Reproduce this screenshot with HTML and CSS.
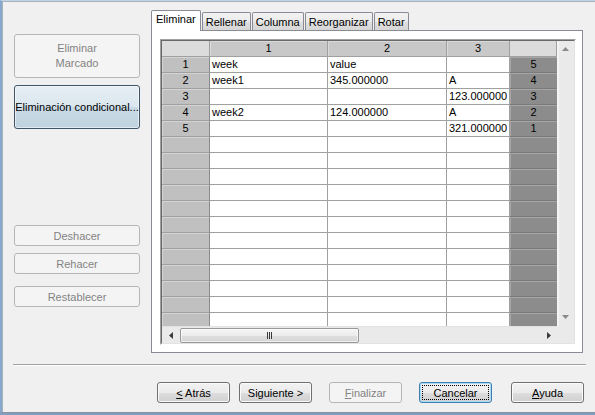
FILE: index.html
```html
<!DOCTYPE html>
<html>

<head>
    <title>Asistente de datos</title>
    <meta charset="utf-8">
    <link rel="stylesheet" href="styles.css">
</head>

<body>
    <div class="window">
        <div class="main">
            <div class="sidebar">
                <button class="btn-side" disabled>Eliminar<br>Marcado</button>
                <button class="btn-side active">Eliminación condicional...</button>

                <div class="side-tools">
                    <button class="btn-tool" disabled>Deshacer</button>
                    <button class="btn-tool" disabled>Rehacer</button>
                    <button class="btn-tool reset" disabled>Restablecer</button>
                </div>
            </div>

            <div class="tab-area">
                <div class="tab-strip">
                    <div class="tab selected">Eliminar</div>
                    <div class="tab">Rellenar</div>
                    <div class="tab">Columna</div>
                    <div class="tab">Reorganizar</div>
                    <div class="tab">Rotar</div>
                </div>

                <div class="tab-panel">
                    <div class="grid-frame">
                        <div class="grid-inner">
                            <div class="grid-body">
                                <table class="sheet">
                                    <tr>
                                        <th class="corner c-rh"></th>
                                        <th class="c-1">1</th>
                                        <th class="c-2">2</th>
                                        <th class="c-3">3</th>
                                        <th class="corner c-dk"></th>
                                    </tr>
                                    <tr><td class="rh">1</td><td>week</td><td>value</td><td></td><td class="dk">5</td></tr>
                                    <tr><td class="rh">2</td><td>week1</td><td>345.000000</td><td>A</td><td class="dk">4</td></tr>
                                    <tr><td class="rh">3</td><td></td><td></td><td>123.000000</td><td class="dk">3</td></tr>
                                    <tr><td class="rh">4</td><td>week2</td><td>124.000000</td><td>A</td><td class="dk">2</td></tr>
                                    <tr><td class="rh">5</td><td></td><td></td><td>321.000000</td><td class="dk">1</td></tr>
                                    <tr><td class="rh"></td><td></td><td></td><td></td><td class="dk"></td></tr>
                                    <tr><td class="rh"></td><td></td><td></td><td></td><td class="dk"></td></tr>
                                    <tr><td class="rh"></td><td></td><td></td><td></td><td class="dk"></td></tr>
                                    <tr><td class="rh"></td><td></td><td></td><td></td><td class="dk"></td></tr>
                                    <tr><td class="rh"></td><td></td><td></td><td></td><td class="dk"></td></tr>
                                    <tr><td class="rh"></td><td></td><td></td><td></td><td class="dk"></td></tr>
                                    <tr><td class="rh"></td><td></td><td></td><td></td><td class="dk"></td></tr>
                                    <tr><td class="rh"></td><td></td><td></td><td></td><td class="dk"></td></tr>
                                    <tr><td class="rh"></td><td></td><td></td><td></td><td class="dk"></td></tr>
                                    <tr><td class="rh"></td><td></td><td></td><td></td><td class="dk"></td></tr>
                                    <tr><td class="rh"></td><td></td><td></td><td></td><td class="dk"></td></tr>
                                    <tr><td class="rh"></td><td></td><td></td><td></td><td class="dk"></td></tr>
                                </table>
                            </div>

                            <div class="vscroll">
                                <svg width="7" height="4" viewBox="0 0 7 4"><polygon points="0,4 7,4 3.5,0" fill="#8a8a8a"/></svg>
                                <svg width="7" height="4" viewBox="0 0 7 4"><polygon points="0,0 7,0 3.5,4" fill="#8a8a8a"/></svg>
                            </div>

                            <div class="hscroll">
                                <div class="arrow-btn">
                                    <svg width="4" height="7" viewBox="0 0 4 7"><polygon points="4,0 4,7 0,3.5" fill="#3c3c3c"/></svg>
                                </div>
                                <div class="thumb"><span class="grip"></span></div>
                                <div class="arrow-btn right">
                                    <svg width="4" height="7" viewBox="0 0 4 7"><polygon points="0,0 0,7 4,3.5" fill="#3c3c3c"/></svg>
                                </div>
                            </div>

                            <div class="scroll-corner"></div>
                        </div>
                    </div>
                </div>
            </div>
        </div>

        <div class="separator"></div>

        <div class="footer">
            <button class="btn"><u>&lt;</u> Atrás</button>
            <button class="btn next">Siguiente &gt;</button>
            <button class="btn finish" disabled><u>F</u>inalizar</button>
            <button class="btn cancel">Cancelar</button>
            <button class="btn help"><u>A</u>yuda</button>
        </div>
    </div>
</body>

</html>
```

FILE: styles.css
```css
* {
    box-sizing: border-box;
}

body {
    margin: 0;
    background: #7f9fc2;
    font-family: "Liberation Sans", Arial, sans-serif;
    font-size: 11px;
    color: #000;
}

button {
    font-family: inherit;
    font-size: 11px;
    padding: 0;
    color: #000;
}

.window {
    width: 595px;
    height: 413px;
    background: #f0f0f0;
    border-left: 2px solid #86a8cc;
    border-top: 1px solid #c2d4e7;
    border-bottom: 1px solid #8a929b;
    box-shadow: inset 1px 1px 0 #a7b2bd;
    display: flex;
    flex-direction: column;
}

.main {
    display: flex;
    height: 352px;
}

/* left column */
.sidebar {
    width: 149px;
    padding: 33px 0 0 12px;
    display: flex;
    flex-direction: column;
}

.btn-side {
    width: 126px;
    height: 44px;
    border: 1px solid #b4b7ba;
    border-radius: 3px;
    background: #f4f4f4;
    color: #838383;
    line-height: 15px;
    white-space: nowrap;
}

.btn-side + .btn-side {
    margin-top: 7px;
}

.btn-side.active {
    border-color: #3f5467;
    color: #000;
    background: linear-gradient(#e6eef4 0%, #dae6ee 50%, #cadbe6 51%, #bed2df 100%);
    box-shadow: inset 0 0 0 1px rgba(255, 255, 255, 0.55);
}

.side-tools {
    margin-top: 96px;
    display: flex;
    flex-direction: column;
    gap: 7px;
}

.btn-tool {
    width: 126px;
    height: 21px;
    border: 1px solid #b4b7ba;
    border-radius: 3px;
    background: #f4f4f4;
    color: #838383;
}

.btn-tool.reset {
    margin-top: 5px;
}

/* tabs */
.tab-area {
    width: 432px;
    padding-top: 9px;
}

.tab-strip {
    display: flex;
    align-items: flex-end;
    height: 20px;
}

.tab {
    height: 18px;
    padding: 3px 3px 0;
    margin-right: 1px;
    border: 1px solid #898c95;
    border-bottom: none;
    border-radius: 2px 2px 0 0;
    background: linear-gradient(#f3f3f3 0%, #ebebeb 50%, #e0e0e0 51%, #d6d6d6 100%);
    line-height: 13px;
    white-space: nowrap;
}

.tab.selected {
    height: 21px;
    padding: 2px 4px 0;
    margin-bottom: -1px;
    background: #fff;
    position: relative;
    z-index: 1;
}

.tab-panel {
    width: 432px;
    height: 323px;
    border: 1px solid #898c95;
    background: #fff;
    padding: 8px 6px 7px 8px;
}

/* data grid */
.grid-frame {
    width: 416px;
    height: 306px;
    border: 1px solid;
    border-color: #a0a0a0 #fff #fff #a0a0a0;
}

.grid-inner {
    height: 100%;
    border: 1px solid;
    border-color: #696969 #e3e3e3 #e3e3e3 #696969;
    display: grid;
    grid-template-columns: 395px 17px;
    grid-template-rows: 285px 17px;
}

.grid-body {
    overflow: hidden;
    background: #fff;
}

.sheet {
    border-collapse: separate;
    border-spacing: 0;
    table-layout: fixed;
    width: 395px;
}

.sheet tr {
    height: 16px;
}

.sheet th,
.sheet td {
    padding: 0 2px;
    line-height: 15px;
    border-right: 1px solid #a0a0a0;
    border-bottom: 1px solid #a0a0a0;
    white-space: nowrap;
    overflow: hidden;
    text-align: left;
    font-weight: normal;
}

.sheet th {
    background: #c8c8c8;
    text-align: center;
    box-shadow: inset 1px 1px 0 #dadada;
}

.sheet th.corner {
    background: #dcdcdc;
    box-shadow: none;
}

.c-rh { width: 48px; }
.c-1 { width: 118px; }
.c-2 { width: 119px; }
.c-3 { width: 63px; }
.c-dk { width: 47px; }

.sheet td.rh {
    background: #c0c0c0;
    text-align: center;
    border-right-color: #8c8c8c;
    box-shadow: inset 1px 1px 0 #d4d4d4;
}

.sheet td.dk {
    background: #8c8c8c;
    text-align: center;
    border-right: none;
    border-bottom-color: #7a7a7a;
    box-shadow: inset 1px 1px 0 #a6a6a6;
}

/* scrollbars */
.vscroll {
    background: linear-gradient(90deg, #f4f4f4 0, #f4f4f4 2px, #eaeaea 2px);
    display: flex;
    flex-direction: column;
    justify-content: space-between;
    align-items: center;
    padding: 6px 0 7px;
}

.hscroll {
    background: #eaeaea;
    border-top: 1px solid #e2e2e2;
    display: flex;
    align-items: center;
}

.arrow-btn {
    width: 17px;
    height: 15px;
    display: flex;
    align-items: center;
    justify-content: center;
}

.arrow-btn.right {
    margin-left: auto;
}

.thumb {
    width: 179px;
    height: 15px;
    margin-left: 1px;
    border: 1px solid #999;
    border-radius: 2px;
    background: linear-gradient(#f6f6f6 0%, #ececec 50%, #dedede 51%, #d6d6d6 100%);
    box-shadow: inset 0 0 0 1px rgba(255, 255, 255, 0.6);
    display: flex;
    align-items: center;
    justify-content: center;
}

.grip {
    width: 5px;
    height: 7px;
    background: repeating-linear-gradient(90deg, #3a3a3a 0, #3a3a3a 1px, transparent 1px, transparent 2px);
}

.scroll-corner {
    background: #eaeaea;
}

/* bottom buttons */
.separator {
    margin: 11px 9px 0 11px;
    border-top: 1px solid #a0a0a0;
    border-bottom: 1px solid #fff;
}

.footer {
    display: flex;
    padding: 16px 0 0 155px;
}

.btn {
    width: 73px;
    height: 21px;
    border: 1px solid #707070;
    border-radius: 3px;
    background: linear-gradient(#f2f2f2 0%, #ebebeb 50%, #dddddd 51%, #cfcfcf 100%);
    box-shadow: inset 0 0 0 1px #fbfbfb;
}

.btn.next {
    margin-left: 9px;
}

.btn.finish {
    margin-left: 17px;
    border-color: #b4b7ba;
    background: #f4f4f4;
    box-shadow: none;
    color: #838383;
}

.btn.cancel {
    margin-left: 17px;
    border-color: #3c7fb1;
    box-shadow: inset 0 0 0 1px #a8dcf6;
    outline: 1px dotted #000;
    outline-offset: -4px;
}

.btn.help {
    margin-left: 19px;
}
```
